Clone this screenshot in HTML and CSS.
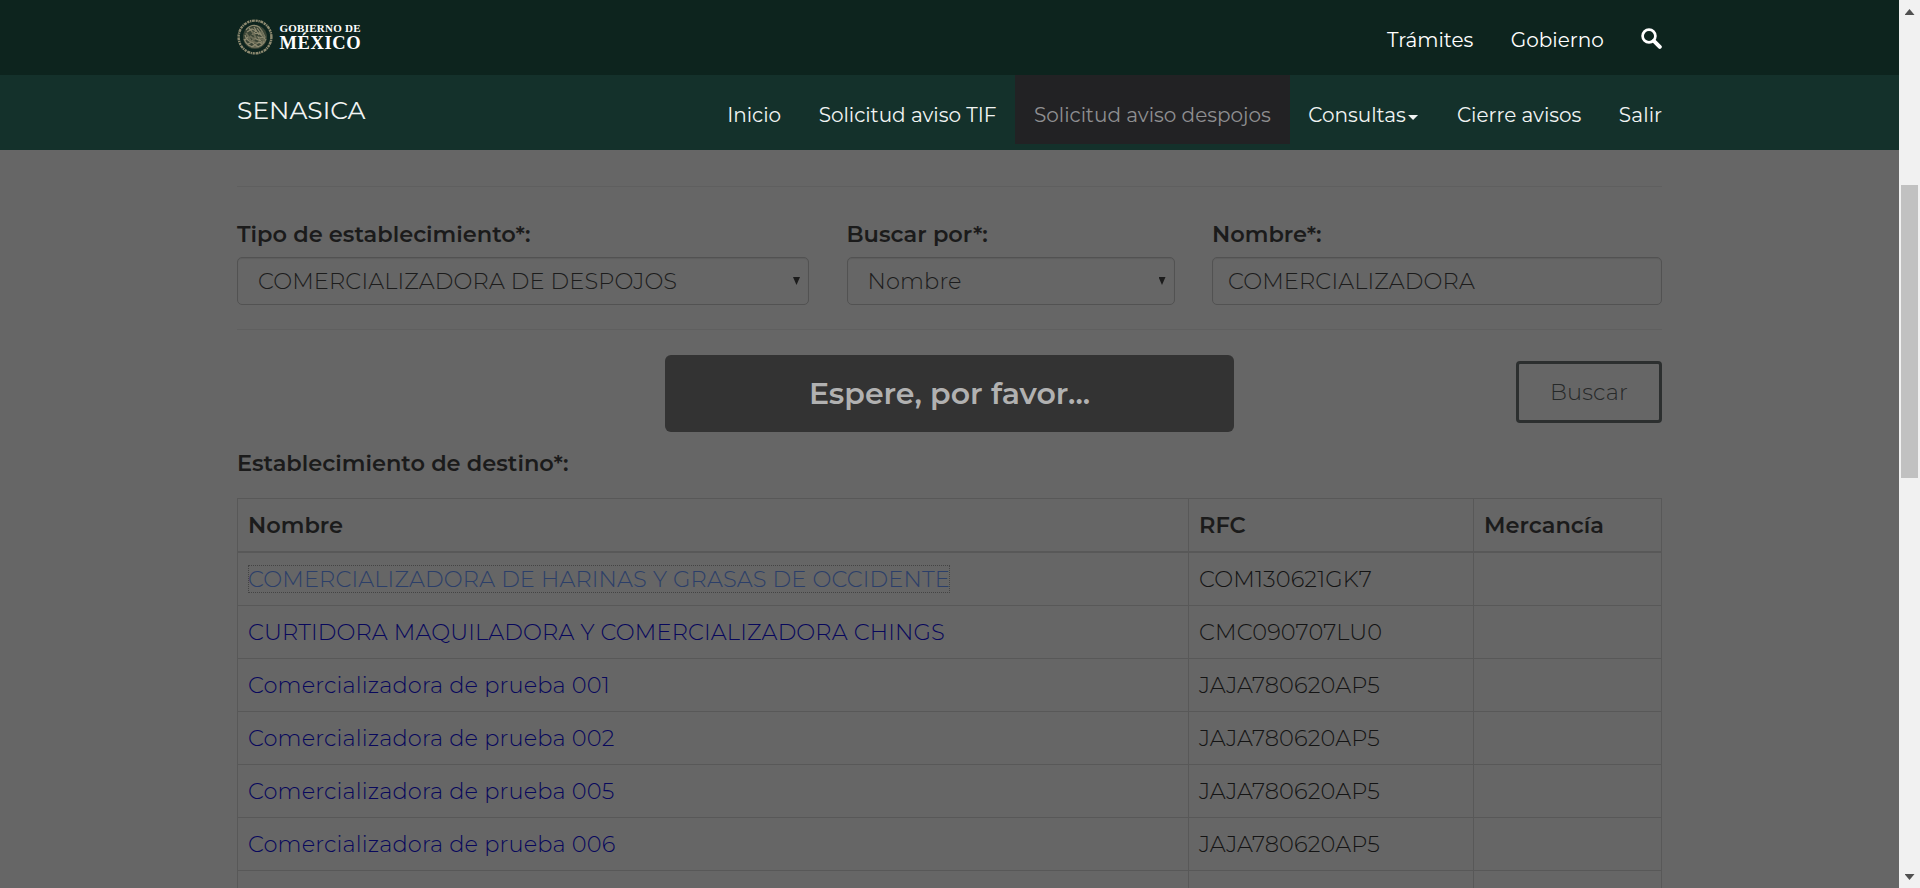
FILE: index.html
```html
<!DOCTYPE html>
<html lang="es">
<head>
<meta charset="utf-8">
<title>SENASICA</title>
<link rel="stylesheet" href="styles.css">
</head>
<body>
<div class="window">
  <div class="page">
    <header class="gov-bar">
      <div class="container bar-row">
        <div class="logo">
          <svg class="emblem" viewBox="0 0 36 36" fill="none" stroke="#8d8a70">
            <circle cx="18" cy="18" r="16.4" stroke-width="2.4" stroke-dasharray="2.2 .7 1.3 .6 3 .8"/>
            <circle cx="18" cy="18" r="12" stroke="none" fill="#3b4536"/>
            <path d="M9 11c3-5 9-6 13-3l3 4 3 6-2 5M10 13l5-3 4 2-3 3 6-1 5 5-6-1 3 4-7-3-2 4-4-5-3 3M8 16c1 4 3 6 7 7l6 1 5-1M7 20c2 5 6 8 11 8s9-3 11-8M11 25l4-2 3 3 4-3 3 2M14 28l4-2 4 2M20 9l5 7M17 8l5 8M12 9l5 6" stroke-width="1.2"/>
            <path d="M9 14l4 6M12 21l8 3M22 19l6 3M15 12l4 7M24 12l3 6M13 17l5 4" stroke="#6c6d57" stroke-width="1.8"/>
          </svg>
          <div class="logo-text"><span class="logo-top">GOBIERNO DE</span><span class="logo-main">MÉXICO</span></div>
        </div>
        <nav class="menu">
          <a>Trámites</a>
          <a>Gobierno</a>
          <a class="search"><svg viewBox="0 0 21 21" fill="none" stroke="#fff"><circle cx="8" cy="8" r="6.4" stroke-width="2.7"/><path d="M12.8 12.8l6 6" stroke-width="4" stroke-linecap="round"/></svg></a>
        </nav>
      </div>
    </header>
    <div class="site-bar">
      <div class="container bar-row">
        <div class="brand">SENASICA</div>
        <nav class="menu">
          <a>Inicio</a>
          <a>Solicitud aviso TIF</a>
          <a class="active">Solicitud aviso despojos</a>
          <a>Consultas<i class="caret"></i></a>
          <a>Cierre avisos</a>
          <a>Salir</a>
        </nav>
      </div>
    </div>
    <main class="container">
      <div class="rule first"></div>
      <div class="form">
        <div><div class="label">Tipo de establecimiento*:</div><div class="field select"><span>COMERCIALIZADORA DE DESPOJOS</span><i class="arrow"></i></div></div>
        <div><div class="label">Buscar por*:</div><div class="field select"><span>Nombre</span><i class="arrow"></i></div></div>
        <div><div class="label">Nombre*:</div><div class="field">COMERCIALIZADORA</div></div>
      </div>
      <div class="rule"></div>
      <div class="actions"><button class="search-button">Buscar</button></div>
      <div class="label">Establecimiento de destino*:</div>
      <table class="results">
        <colgroup><col class="col-name"><col class="col-rfc"><col class="col-goods"></colgroup>
        <thead><tr><th>Nombre</th><th>RFC</th><th>Mercancía</th></tr></thead>
        <tbody>
          <tr><td><a class="focused">COMERCIALIZADORA DE HARINAS Y GRASAS DE OCCIDENTE</a></td><td>COM130621GK7</td><td></td></tr>
          <tr><td><a>CURTIDORA MAQUILADORA Y COMERCIALIZADORA CHINGS</a></td><td>CMC090707LU0</td><td></td></tr>
          <tr><td><a>Comercializadora de prueba 001</a></td><td>JAJA780620AP5</td><td></td></tr>
          <tr><td><a>Comercializadora de prueba 002</a></td><td>JAJA780620AP5</td><td></td></tr>
          <tr><td><a>Comercializadora de prueba 005</a></td><td>JAJA780620AP5</td><td></td></tr>
          <tr><td><a>Comercializadora de prueba 006</a></td><td>JAJA780620AP5</td><td></td></tr>
          <tr><td></td><td></td><td></td></tr>
        </tbody>
      </table>
    </main>
    <div class="wait">Espere, por favor...</div>
  </div>
  <div class="scrollbar"><i class="up"></i><div class="track"><div class="thumb"></div></div><i class="down"></i></div>
</div>
</body>
</html>
```
FILE: styles.css
```css
* { box-sizing: border-box; }
body { margin: 0; overflow: hidden; background: #666; font-family: Montserrat, Inter, "Open Sans", sans-serif; font-size: 22.5px; font-weight: 300; color: #141414; }
.window { display: flex; height: 888px; overflow: hidden; }
.page { position: relative; flex: 1; height: 888px; overflow: hidden; background: #666; }
.container { width: 1425px; margin: 0 auto; }
.bar-row { display: flex; justify-content: space-between; align-items: flex-start; }

.gov-bar { height: 75px; background: #0d241e; }
.site-bar { height: 75px; background: #14312b; }

.logo { display: flex; gap: 6.5px; padding-top: 19px; }
.emblem { display: block; width: 36px; height: 36px; }
.logo-text { display: flex; flex-direction: column; padding-top: 3px; font-family: "Liberation Serif", serif; font-weight: 700; color: #fff; white-space: nowrap; }
.logo-top { font-size: 11px; line-height: 13px; letter-spacing: .25px; }
.logo-main { font-size: 18.5px; line-height: 17px; letter-spacing: .6px; }

.menu { display: flex; margin-right: -19px; font-size: 20px; font-weight: 400; line-height: 30px; color: #fff; }
.menu a { display: flex; padding: 25px 18.75px 14px; white-space: nowrap; }
.site-bar .menu { color: #f1f4f3; }
.site-bar .menu a:last-child { letter-spacing: .1px; }
.site-bar .active { background: #222224; color: #8f8f91; }
.search svg { display: block; width: 21px; height: 21px; margin-top: 3px; }
.caret { margin: 15px 1.3px 0 2.3px; width: 10px; height: 5px; background: #f1f4f3; clip-path: polygon(0 0, 100% 0, 50% 100%); }
.brand { padding-top: 17px; font-size: 25px; line-height: 36px; font-weight: 400; color: #f1f4f3; }

.rule { height: 1px; background: #5f5f5f; margin: 24px 0 31px; }
.rule.first { margin-top: 36px; }
.form { display: grid; grid-template-columns: 572px 328px 450px; gap: 37.5px; }
.label { height: 32px; line-height: 32px; font-weight: 600; color: #1b1b1b; white-space: nowrap; }
.field { display: flex; justify-content: space-between; align-items: center; height: 48px; margin-top: 7px; padding: 0 16px 0 15px; border: 1px solid #525252; border-radius: 5px; box-shadow: inset 0 1px 1px rgba(0, 0, 0, .08); color: #1c1c1c; letter-spacing: .13px; }
.select { padding: 0 8px 0 20px; }
.arrow { width: 7px; height: 8px; background: #1c1c1c; clip-path: polygon(0 0, 100% 0, 50% 100%); }

.actions { display: flex; justify-content: flex-end; margin-bottom: 24px; }
.search-button { width: 146px; height: 62px; padding: 0; border: 3px solid #2c2f2f; border-radius: 4px; background: none; color: #262929; font: inherit; letter-spacing: .13px; }

.results { width: 1425px; margin-top: 19px; table-layout: fixed; border-collapse: separate; border-spacing: 0; border-left: 1px solid #585858; }
.col-name { width: 951px; }
.col-rfc { width: 285px; }
.col-goods { width: 188px; }
th, td { padding: 0 0 0 10px; border-right: 1px solid #585858; text-align: left; line-height: 32px; white-space: nowrap; }
th { height: 55px; border-top: 1px solid #585858; border-bottom: 2px solid #585858; font-weight: 600; color: #1b1b1b; }
td { height: 53px; border-bottom: 1px solid #585858; letter-spacing: .15px; }
.results a { color: #08085c; }
.results .focused { color: #2c3f69; outline: 1px dotted #444; outline-offset: -1px; }

.wait { position: absolute; left: 665px; top: 355px; width: 569px; height: 77px; border-radius: 6px; background: #333; color: #b1b1b1; font-size: 30px; font-weight: 600; line-height: 77px; text-align: center; }

.scrollbar { display: flex; flex-direction: column; align-items: center; width: 21px; background: #f1f1f1; padding: 9px 0 8px; }
.scrollbar i { width: 10px; height: 6px; background: #505050; }
.up { clip-path: polygon(50% 0, 100% 100%, 0 100%); }
.down { clip-path: polygon(0 0, 100% 0, 50% 100%); }
.track { flex: 1; width: 17px; padding-top: 170px; }
.thumb { height: 293px; background: #c1c1c1; }
```
